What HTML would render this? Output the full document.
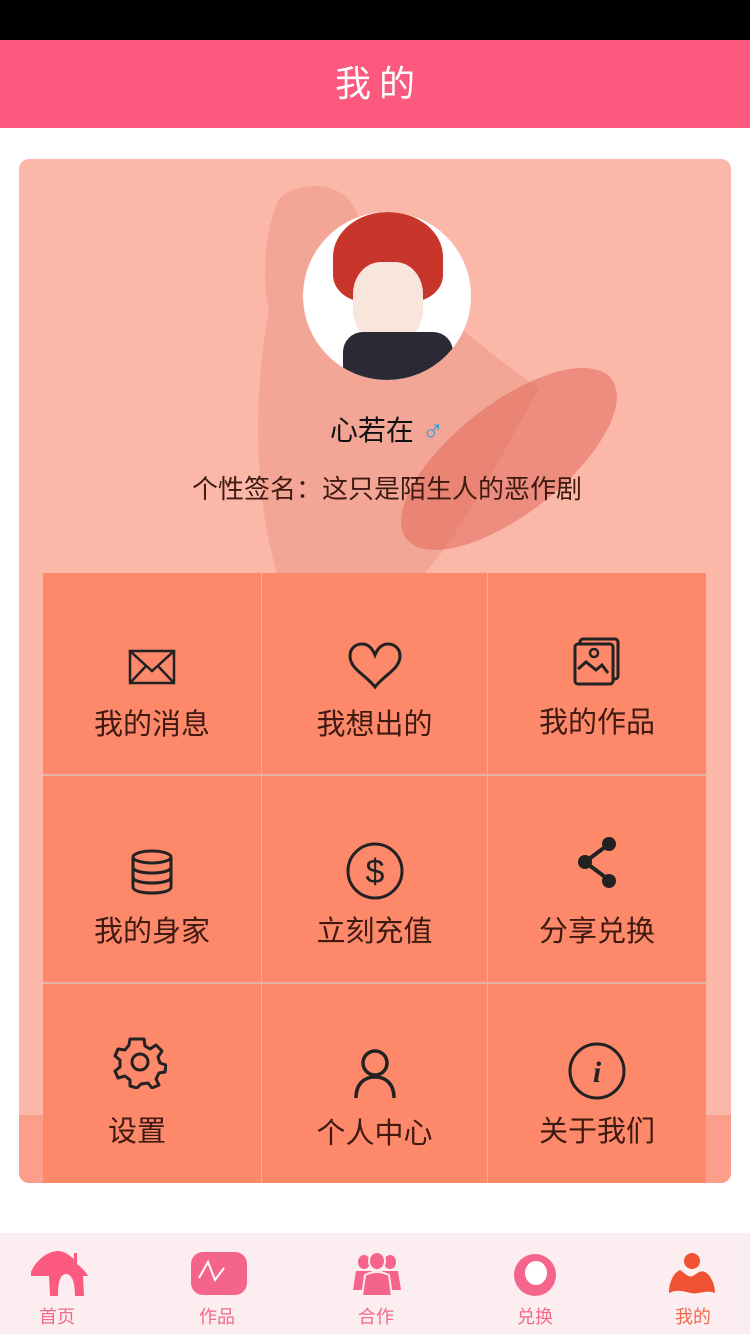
<!DOCTYPE html>
<html><head><meta charset="utf-8"><style>
*{margin:0;padding:0;box-sizing:border-box}
body{width:750px;height:1334px;background:#fff;font-family:"Liberation Sans","Noto Sans CJK SC",sans-serif;position:relative;overflow:hidden}
.abs{position:absolute}
.tile{position:absolute;background:#fd886a;text-align:center;color:#3e1a12;font-size:29px}
.tile span{position:absolute;left:0;right:0}
.tile svg{position:absolute;left:50%;transform:translateX(-50%)}
.nav{position:absolute;top:1233px;left:0;width:750px;height:101px;background:#fcedf1}
.ni{position:absolute;top:1303px;font-size:18px;color:#f26a8a;width:80px;text-align:center}
</style></head><body>
<div class="abs" style="top:0;left:0;width:750px;height:40px;background:#000"></div>
<div class="abs" style="top:40px;left:0;width:750px;height:88px;background:#fd587d;color:#fff;font-size:36px;text-align:center;line-height:88px;letter-spacing:8px;padding-left:8px">我的</div>
<div class="abs" style="top:159px;left:19px;width:712px;height:1024px;background:#fbb8a8;border-radius:10px;overflow:hidden">
 <div class="abs" style="top:956px;left:0;width:712px;height:68px;background:#fb9e8a"></div>
 <svg class="abs" style="left:0;top:0" width="712" height="420">
  <path d="M250 150C240 110 250 60 260 40C280 20 330 20 340 60L380 120L480 200L520 230C480 300 440 380 400 420H260C240 360 230 260 250 150Z" fill="#e9907e" opacity=".45"/>
  <ellipse cx="490" cy="300" rx="130" ry="55" fill="#e26a5c" opacity=".55" transform="rotate(-38 490 300)"/>
 </svg>
 <div class="abs" style="left:284px;top:53px;width:168px;height:168px;border-radius:50%;background:#fff;overflow:hidden">
  <div class="abs" style="left:30px;top:0;width:110px;height:90px;border-radius:50% 50% 30% 30%;background:#c8352a"></div>
  <div class="abs" style="left:50px;top:50px;width:70px;height:80px;border-radius:40%;background:#f8e6dc"></div>
  <div class="abs" style="left:40px;top:120px;width:110px;height:60px;background:#2a2a35;border-radius:20px 20px 0 0"></div>
 </div>
 <div class="abs" style="left:0;width:736px;top:250px;text-align:center;font-size:28px;color:#111">心若在 <span style="color:#2a9fe0;font-size:30px;font-weight:bold">♂</span></div>
 <div class="abs" style="left:0;width:736px;top:310px;text-align:center;font-size:26px;color:#3e1a12">个性签名：这只是陌生人的恶作剧</div>
</div>
<div class="abs" style="left:43px;top:573px;width:663px;height:610px;background:#e0b5a8"></div>
<div class="tile" style="left:43px;top:573px;width:218px;height:201px">
 <svg style="top:76px" width="48" height="36" viewBox="0 0 48 36"><rect x="2" y="2" width="44" height="32" fill="none" stroke="#222" stroke-width="2.5"/><path d="M2 2L24 22L46 2M2 34L18 17M46 34L30 17" fill="none" stroke="#222" stroke-width="2.5"/></svg>
 <span style="top:128px">我的消息</span></div>
<div class="tile" style="left:262px;top:573px;width:225px;height:201px">
 <svg style="top:68px" width="58" height="50" viewBox="0 0 58 50"><path d="M29 46C20 34 4 28 4 15C4 7 10 3 16 3C23 3 27 9 29 14C31 9 35 3 42 3C48 3 54 7 54 15C54 28 38 34 29 46Z" fill="none" stroke="#222" stroke-width="3"/></svg>
 <span style="top:128px">我想出的</span></div>
<div class="tile" style="left:488px;top:573px;width:218px;height:201px">
 <svg style="top:64px" width="50" height="50" viewBox="0 0 50 50"><rect x="8" y="2" width="38" height="40" rx="3" fill="none" stroke="#222" stroke-width="3"/><rect x="3" y="7" width="38" height="40" rx="3" fill="#fd886a" stroke="#222" stroke-width="3"/><circle cx="22" cy="16" r="4" fill="none" stroke="#222" stroke-width="2.5"/><path d="M6 32L14 25L24 33L30 28L36 36" fill="none" stroke="#222" stroke-width="3"/></svg>
 <span style="top:126px">我的作品</span></div>
<div class="tile" style="left:43px;top:776px;width:218px;height:206px">
 <svg style="top:73px" width="44" height="46" viewBox="0 0 44 46"><ellipse cx="22" cy="8" rx="19" ry="6" fill="none" stroke="#222" stroke-width="3"/><path d="M3 8V38C3 42 12 44 22 44S41 42 41 38V8M3 18C3 22 12 24 22 24S41 22 41 18M3 28C3 32 12 34 22 34S41 32 41 28" fill="none" stroke="#222" stroke-width="3"/></svg>
 <span style="top:132px">我的身家</span></div>
<div class="tile" style="left:262px;top:776px;width:225px;height:206px">
 <svg style="top:66px" width="58" height="58" viewBox="0 0 58 58"><circle cx="29" cy="29" r="27" fill="none" stroke="#222" stroke-width="3"/><text x="29" y="41" font-size="34" text-anchor="middle" fill="#222" font-family="Liberation Sans">$</text></svg>
 <span style="top:132px">立刻充值</span></div>
<div class="tile" style="left:488px;top:776px;width:218px;height:206px">
 <svg style="top:60px" width="44" height="54" viewBox="0 0 44 54"><path d="M34 8L10 26L34 44" fill="none" stroke="#222" stroke-width="4"/><circle cx="34" cy="8" r="7" fill="#222"/><circle cx="10" cy="26" r="7" fill="#222"/><circle cx="34" cy="45" r="7" fill="#222"/></svg>
 <span style="top:132px">分享兑换</span></div>
<div class="tile" style="left:43px;top:984px;width:218px;height:199px">
 <svg style="top:51px;margin-left:-12px" width="54" height="54" viewBox="-27 -27 54 54"><g fill="none" stroke="#222" stroke-width="3"><circle r="8"/><path d="M-4-23L4-23L5-16L10-13L16-17L22-11L18-5L20 1L26 3L25 10L19 11L16 17L19 23L12 26L8 21L1 22L-3 26L-10 24L-10 18L-15 14L-22 16L-25 9L-20 5L-20-2L-25-6L-22-13L-15-12L-11-17L-10-23Z" stroke-linejoin="round"/></g></svg>
 <span style="top:124px;margin-left:-30px">设置</span></div>
<div class="tile" style="left:262px;top:984px;width:225px;height:199px">
 <svg style="top:64px" width="44" height="52" viewBox="0 0 44 52"><circle cx="22" cy="15" r="12" fill="none" stroke="#222" stroke-width="3.5"/><path d="M3 50C3 36 11 29 22 29S41 36 41 50" fill="none" stroke="#222" stroke-width="3.5"/></svg>
 <span style="top:126px">个人中心</span></div>
<div class="tile" style="left:488px;top:984px;width:218px;height:199px">
 <svg style="top:57px" width="60" height="60" viewBox="0 0 60 60"><circle cx="30" cy="30" r="27" fill="none" stroke="#222" stroke-width="3"/><text x="30" y="41" font-size="30" font-style="italic" font-weight="bold" text-anchor="middle" fill="#222" font-family="Liberation Serif">i</text></svg>
 <span style="top:124px">关于我们</span></div>

<div class="nav"></div>
<svg class="abs" style="left:30px;top:1250px" width="60" height="48" viewBox="0 0 60 48"><path d="M1 22C6 10 18 1 28 1C35 1 40 6 44 9V3H47V14C52 18 56 22 58 26H53L54 46H45C45 30 41 24 36 24S28 30 28 46H20L19 26H1Z" fill="#fd5a80"/></svg>
<div class="ni" style="left:17px">首页</div>
<svg class="abs" style="left:190px;top:1251px" width="58" height="45" viewBox="0 0 58 45"><rect x="1" y="1" width="56" height="43" rx="12" fill="#f5648a"/><path d="M9 27L18 11L25 29L34 17" fill="none" stroke="#fff" stroke-width="2"/></svg>
<div class="ni" style="left:177px">作品</div>
<svg class="abs" style="left:352px;top:1252px" width="50" height="44" viewBox="0 0 50 44"><ellipse cx="12" cy="10" rx="6" ry="7" fill="#f5648a"/><ellipse cx="38" cy="10" rx="6" ry="7" fill="#f5648a"/><path d="M1 38L4 19H20L16 38ZM49 38L46 19H30L34 38Z" fill="#f5648a"/><ellipse cx="25" cy="9" rx="8" ry="9" fill="#f5648a" stroke="#fcedf1" stroke-width="2"/><path d="M10 44L13 23C17 21 21 20 25 20S33 21 37 23L40 44Z" fill="#f5648a" stroke="#fcedf1" stroke-width="2"/></svg>
<div class="ni" style="left:336px">合作</div>
<svg class="abs" style="left:512px;top:1253px" width="46" height="44" viewBox="0 0 46 44"><ellipse cx="23" cy="22" rx="21" ry="21" fill="#f5648a"/><ellipse cx="24" cy="20" rx="11" ry="12" fill="#fff"/></svg>
<div class="ni" style="left:495px">兑换</div>
<svg class="abs" style="left:667px;top:1253px" width="50" height="44" viewBox="0 0 50 44"><ellipse cx="25" cy="8" rx="8" ry="8" fill="#ef5131"/><path d="M2 40C2 30 6 20 13 17C18 20 21 25 26 23C30 20 34 17 38 19C44 22 48 32 48 40C40 36 30 42 24 40C16 38 10 36 2 40Z" fill="#ef5131"/></svg>
<div class="ni" style="left:653px;color:#ef6a4a">我的</div>
</body></html>
